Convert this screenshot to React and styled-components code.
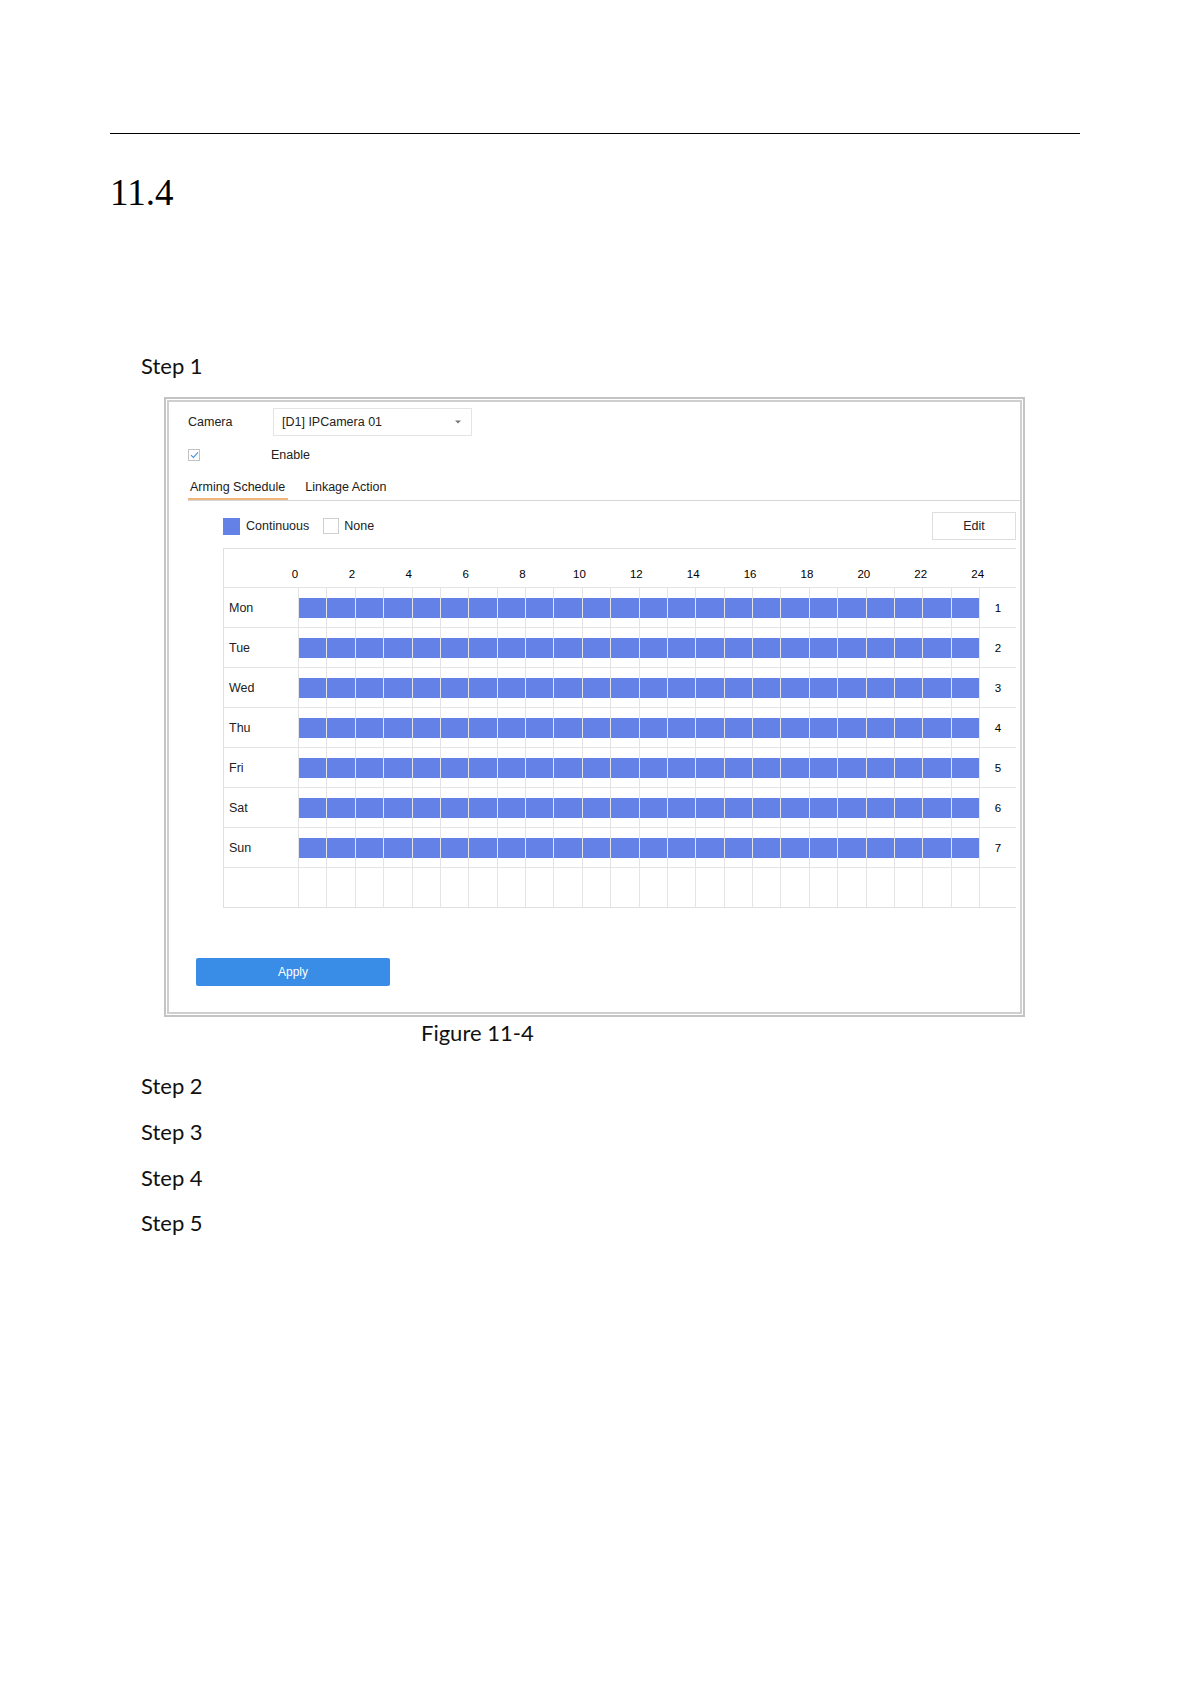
import React from "react";
import styled, { createGlobalStyle } from "styled-components";

const Global = createGlobalStyle`
  html, body { margin: 0; padding: 0; background: #fff; }
  body { font-family: "Liberation Sans", Arial, sans-serif; color: #000; }
`;

const Page = styled.div`
  width: 1191px;
  min-height: 1684px;
  box-sizing: border-box;
  padding: 133px 0 0 110px;
`;

const Rule = styled.div`
  width: 970px;
  height: 1px;
  background: #000;
`;

const Heading = styled.h1`
  margin: 40px 0 0 0;
  font-family: "Liberation Serif", "Times New Roman", serif;
  font-weight: normal;
  font-size: 37px;
  line-height: 37px;
`;

const StepLine = styled.div`
  margin: ${(p) => p.$top}px 0 0 31px;
  font-family: Lato, "Open Sans", sans-serif;
  font-size: 22px;
  line-height: 26px;
  color: #111;
`;

const Caption = styled.div`
  margin: 3px 0 0 311px;
  font-family: Lato, "Open Sans", sans-serif;
  font-size: 22px;
  line-height: 26px;
  color: #111;
`;

const Frame = styled.div`
  margin: 18px 0 0 54px;
  width: 861px;
  height: 620px;
  box-sizing: border-box;
  border: 2px solid #c4c4c4;
  padding: 1px;
`;

const Inner = styled.div`
  height: 100%;
  box-sizing: border-box;
  border: 2px solid #cfcfcf;
  display: flex;
  flex-direction: column;
  font-size: 12.5px;
  color: #222;
`;

const FieldRow = styled.div`
  display: flex;
  align-items: center;
  margin: ${(p) => p.$top}px 0 0 19px;
  height: ${(p) => p.$h}px;
`;

const FieldLabel = styled.div`
  width: ${(p) => p.$w || 85}px;
  flex: none;
  display: flex;
  align-items: center;
`;

const Select = styled.div`
  width: 199px;
  height: 28px;
  box-sizing: border-box;
  border: 1px solid #e4e4e4;
  display: flex;
  align-items: center;
  justify-content: space-between;
  padding: 0 10px 0 8px;
  color: #222;
`;

const Check = styled.div`
  width: 12px;
  height: 12px;
  box-sizing: border-box;
  border: 1px solid #c2c2c2;
  display: flex;
  align-items: center;
  justify-content: center;
`;

const TabBar = styled.div`
  display: flex;
  gap: 15px;
  margin: 8px 0 0 19px;
  border-bottom: 1px solid #d6d6d6;
`;

const Tab = styled.div`
  height: 25px;
  box-sizing: border-box;
  padding: 0 3px 0 2px;
  display: flex;
  align-items: center;
  border-bottom: 2px solid ${(p) => (p.$active ? "#efb57c" : "transparent")};
  color: #1a1a1a;
`;

const LegendRow = styled.div`
  display: flex;
  align-items: center;
  margin: 11px 4px 0 54px;
  height: 28px;
`;

const Swatch = styled.div`
  width: ${(p) => (p.$filled ? 17 : 16)}px;
  height: ${(p) => (p.$filled ? 17 : 16)}px;
  box-sizing: border-box;
  background: ${(p) => (p.$filled ? "#6481e8" : "#fff")};
  border: ${(p) => (p.$filled ? "none" : "1px solid #cfcfcf")};
  margin-right: ${(p) => (p.$filled ? 6 : 5)}px;
`;

const LegendText = styled.span`
  margin-right: ${(p) => p.$mr || 0}px;
  color: #222;
`;

const EditButton = styled.div`
  margin-left: auto;
  width: 84px;
  height: 28px;
  box-sizing: border-box;
  border: 1px solid #dedede;
  display: flex;
  align-items: center;
  justify-content: center;
  color: #222;
`;

const Grid = styled.div`
  margin: 8px 4px 0 54px;
  border-top: 1px solid #e0e0e0;
  border-left: 1px solid #e0e0e0;
  border-bottom: 1px solid #e0e0e0;
`;

const HeaderRow = styled.div`
  display: grid;
  grid-template-columns: 42.5px repeat(13, 56.9px) 1fr;
  height: 38px;
  box-sizing: border-box;
  padding-top: 11px;
  align-items: center;
  font-size: 11.5px;
  color: #000;
`;

const HourLabel = styled.div`
  text-align: center;
`;

const DayRow = styled.div`
  display: grid;
  grid-template-columns: 74px repeat(24, 1fr) 37px;
  height: 40px;
  box-sizing: border-box;
  border-top: 1px solid #e4e4e4;
`;

const DayName = styled.div`
  display: flex;
  align-items: center;
  padding-left: 5px;
  color: #222;
`;

const HourCell = styled.div`
  border-left: 1px solid #e4e4e4;
  display: flex;
  align-items: center;
`;

const Segment = styled.div`
  width: 100%;
  height: 20px;
  background: #6481e8;
`;

const NumCell = styled.div`
  border-left: 1px solid #e4e4e4;
  display: flex;
  align-items: center;
  justify-content: center;
  font-size: 11.5px;
  color: #000;
`;

const ApplyButton = styled.div`
  margin: 50px 0 0 27px;
  width: 194px;
  height: 28px;
  border-radius: 2px;
  background: #3a8de6;
  color: #fff;
  display: flex;
  align-items: center;
  justify-content: center;
  font-size: 12px;
`;

const days = ["Mon", "Tue", "Wed", "Thu", "Fri", "Sat", "Sun"];
const hours = Array.from({ length: 24 }, (_, i) => i);
const labels = Array.from({ length: 13 }, (_, i) => i * 2);
const schedule = days.map(() => hours.map(() => true));

export default function App() {
  return (
    <Page>
      <Global />
      <Rule />
      <Heading>11.4</Heading>
      <StepLine $top={142}>Step 1</StepLine>
      <Frame>
        <Inner>
          <FieldRow $top={6} $h={28}>
            <FieldLabel>Camera</FieldLabel>
            <Select>
              <span>[D1] IPCamera 01</span>
              <svg width="6" height="4" viewBox="0 0 6 4">
                <path d="M0 0.5 L6 0.5 L3 3.5 Z" fill="#777" />
              </svg>
            </Select>
          </FieldRow>
          <FieldRow $top={7} $h={24}>
            <FieldLabel $w={83}>
              <Check>
                <svg width="9" height="8" viewBox="0 0 9 8">
                  <path d="M1 4.2 L3.4 6.4 L8 1.4" fill="none" stroke="#4a8fdc" strokeWidth="1.1" />
                </svg>
              </Check>
            </FieldLabel>
            <span>Enable</span>
          </FieldRow>
          <TabBar>
            <Tab $active>Arming Schedule</Tab>
            <Tab>Linkage Action</Tab>
          </TabBar>
          <LegendRow>
            <Swatch $filled />
            <LegendText $mr={14}>Continuous</LegendText>
            <Swatch />
            <LegendText>None</LegendText>
            <EditButton>Edit</EditButton>
          </LegendRow>
          <Grid>
            <HeaderRow>
              <div />
              {labels.map((l) => (
                <HourLabel key={l}>{l}</HourLabel>
              ))}
              <div />
            </HeaderRow>
            {days.map((d, di) => (
              <DayRow key={d}>
                <DayName>{d}</DayName>
                {hours.map((h) => (
                  <HourCell key={h}>{schedule[di][h] && <Segment />}</HourCell>
                ))}
                <NumCell>{di + 1}</NumCell>
              </DayRow>
            ))}
            <DayRow>
              <DayName />
              {hours.map((h) => (
                <HourCell key={h} />
              ))}
              <NumCell />
            </DayRow>
          </Grid>
          <ApplyButton>Apply</ApplyButton>
        </Inner>
      </Frame>
      <Caption>Figure 11-4</Caption>
      <StepLine $top={27}>Step 2</StepLine>
      <StepLine $top={20}>Step 3</StepLine>
      <StepLine $top={20}>Step 4</StepLine>
      <StepLine $top={19}>Step 5</StepLine>
    </Page>
  );
}
